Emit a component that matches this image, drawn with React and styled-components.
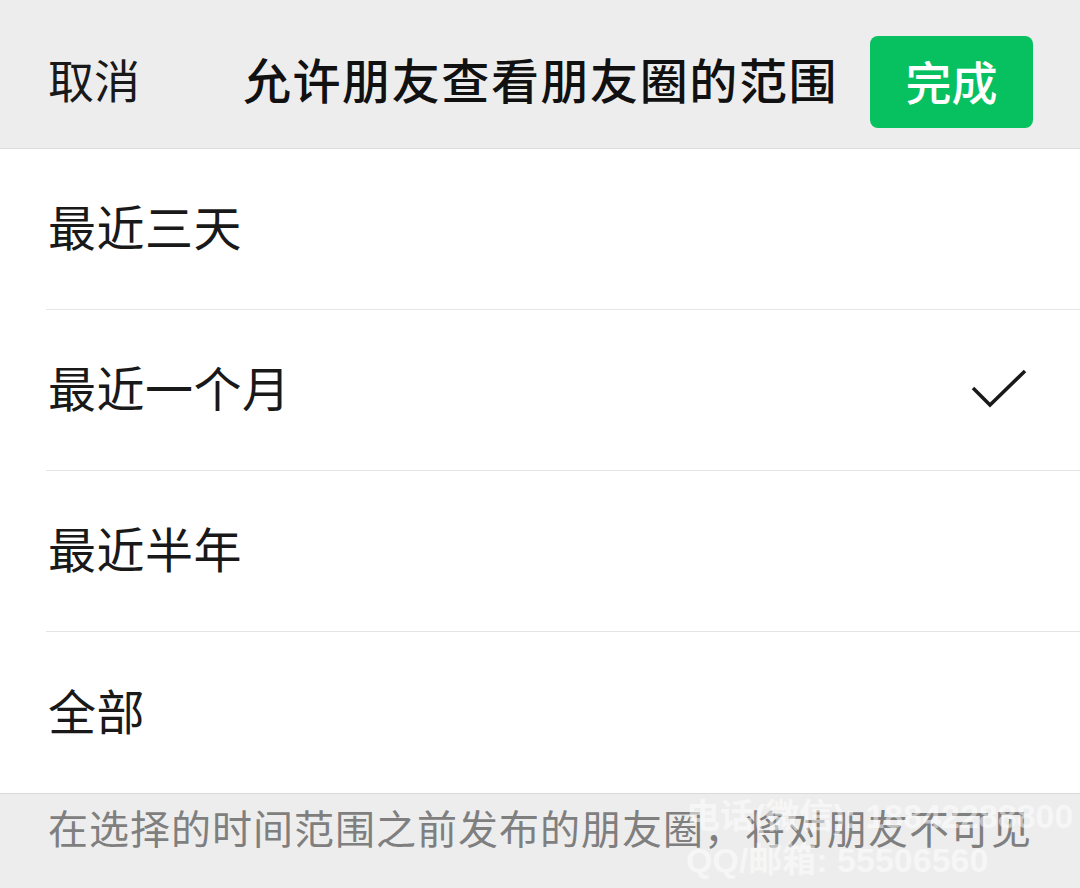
import React, { useState } from "react";
import styled, { createGlobalStyle } from "styled-components";

const GlobalStyle = createGlobalStyle`
  html, body {
    margin: 0;
    padding: 0;
    background: #ededed;
  }
  body {
    font-family: "Noto Sans CJK SC", "Noto Sans", sans-serif;
    -webkit-font-smoothing: antialiased;
  }
`;

const Page = styled.div`
  width: 1080px;
  height: 888px;
  overflow: hidden;
  position: relative;
  background: #ededed;
  display: flex;
  flex-direction: column;
`;

const Header = styled.header`
  height: 148px;
  flex: none;
  display: grid;
  grid-template-columns: 1fr auto 1fr;
  align-items: center;
  padding: 0 47px 0 48px;
  background: #ededed;
  border-bottom: 1px solid #dcdcdc;
`;

const Cancel = styled.span`
  font-size: 46px;
  color: #191919;
  justify-self: start;
  margin-top: 8px;
`;

const Title = styled.h1`
  margin: 8px 0 0;
  font-size: 48px;
  font-weight: 500;
  color: #111;
  letter-spacing: 1.6px;
`;

const DoneButton = styled.button`
  justify-self: end;
  width: 163px;
  height: 92px;
  border: none;
  border-radius: 8px;
  background: #07c160;
  color: #fff;
  font-family: inherit;
  font-size: 46px;
  font-weight: 500;
  cursor: pointer;
  margin-top: 16px;
  padding: 0 0 4px;
`;

const List = styled.ul`
  list-style: none;
  margin: 0;
  padding: 0;
  background: #fff;
`;

const Row = styled.li`
  height: 161px;
  box-sizing: border-box;
  display: flex;
  align-items: center;
  justify-content: space-between;
  margin-left: 46px;
  padding: 0 53px 8px 2px;
  border-bottom: ${(p) => (p.$last ? "none" : "1px solid #e5e5e5")};
  font-size: 48px;
  letter-spacing: 0.5px;
  color: #191919;
  cursor: pointer;

  svg {
    margin-top: 4px;
  }
`;

const Footer = styled.footer`
  flex: 1;
  border-top: 1px solid #d9d9d9;
  padding: 4px 48px 0;
  font-size: 40px;
  color: #7f7f7f;
  letter-spacing: 1px;
`;

const Watermark = styled.div`
  position: absolute;
  left: 686px;
  top: 794px;
  font-family: "Liberation Sans", "Noto Sans CJK SC", sans-serif;
  font-size: 34px;
  font-weight: 700;
  line-height: 44px;
  color: rgba(255, 255, 255, 0.5);
  pointer-events: none;
  white-space: nowrap;
`;

const Check = () => (
  <svg width="56" height="40" viewBox="0 0 56 40">
    <polyline
      points="2,20 19,37 54,3"
      fill="none"
      stroke="#191919"
      strokeWidth="3.5"
    />
  </svg>
);

const options = ["最近三天", "最近一个月", "最近半年", "全部"];

export default function App() {
  const [selected, setSelected] = useState(1);
  return (
    <>
      <GlobalStyle />
      <Page>
        <Header>
          <Cancel>取消</Cancel>
          <Title>允许朋友查看朋友圈的范围</Title>
          <DoneButton>完成</DoneButton>
        </Header>
        <List>
          {options.map((o, i) => (
            <Row
              key={o}
              $last={i === options.length - 1}
              onClick={() => setSelected(i)}
            >
              <span>{o}</span>
              {selected === i && <Check />}
            </Row>
          ))}
        </List>
        <Footer>在选择的时间范围之前发布的朋友圈，将对朋友不可见</Footer>
        <Watermark>
          电话(微信): 18842288800
          <br />
          QQ/邮箱: 55506560
        </Watermark>
      </Page>
    </>
  );
}
